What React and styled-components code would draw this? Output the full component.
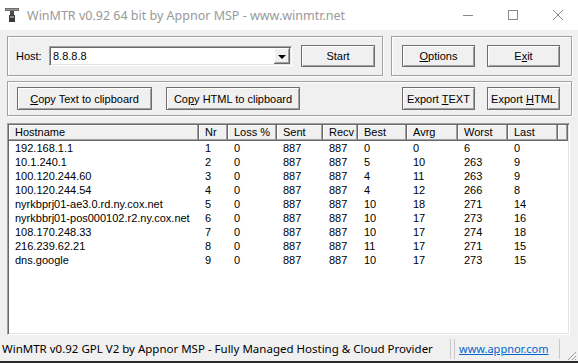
import React from 'react';
import styled, { createGlobalStyle } from 'styled-components';

const GlobalStyle = createGlobalStyle`
  html, body {
    margin: 0;
    padding: 0;
    background: #f0f0f0;
  }
  body {
    width: 578px;
    height: 363px;
    overflow: hidden;
    font-family: "Liberation Sans", Arial, sans-serif;
    font-size: 11px;
    color: #000;
  }
`

const Window = styled.div`
  display: flex;
  flex-direction: column;
  width: 578px;
  height: 363px;
  overflow: hidden;
`

const TitleBar = styled.div`
  display: flex;
  align-items: center;
  height: 30px;
  flex-shrink: 0;
  background: #fff;
`

const AppIcon = styled.svg`
  margin-left: 4px;
  flex-shrink: 0;
`

const Title = styled.span`
  margin-left: 7px;
  font-family: "Noto Sans", sans-serif;
  font-size: 12.5px;
  color: #999;
  white-space: nowrap;
`

const Controls = styled.div`
  display: flex;
  margin-left: auto;
  margin-right: -2px;
  height: 30px;
`

const ControlBox = styled.div`
  width: 45px;
  display: flex;
  align-items: center;
  justify-content: center;
`

const Client = styled.div`
  display: flex;
  flex-direction: column;
  height: 307px;
  flex-shrink: 0;
  padding: 0 6px 0 7px;
  box-sizing: border-box;
`

const Row = styled.div`
  display: flex;
  margin-top: ${p => p.top}px;
  gap: 8px;
`

const GroupBox = styled.div`
  display: flex;
  align-items: center;
  box-sizing: border-box;
  height: ${p => p.h}px;
  width: ${p => (p.w ? `${p.w}px` : 'auto')};
  flex: ${p => (p.w ? '0 0 auto' : '1')};
  padding: 0 ${p => p.pr ?? 7}px 0 ${p => p.pl || 8}px;
  border: 1px solid #a0a0a0;
  box-shadow: inset 1px 1px 0 #fff, 1px 1px 0 #fff;
  gap: ${p => p.gap || 0}px;
`

const Label = styled.span`
  width: 33px;
  flex-shrink: 0;
`

const Combo = styled.div`
  display: flex;
  width: 244px;
  height: 20px;
  box-sizing: border-box;
  background: #fff;
  border-top: 1px solid #a0a0a0;
  border-left: 1px solid #a0a0a0;
  border-bottom: 1px solid #fff;
  border-right: 1px solid #fff;
  box-shadow: inset 1px 1px 0 #696969, inset -1px -1px 0 #e3e3e3;
  padding: 1px;
  margin-right: 9px;
`

const ComboText = styled.span`
  flex: 1;
  padding: 2px 0 0 2px;
  line-height: 13px;
`

const DropButton = styled.div`
  width: 16px;
  display: flex;
  align-items: center;
  justify-content: center;
  background: #f0f0f0;
  box-shadow: inset -1px -1px 0 #696969, inset 1px 1px 0 #fff, inset -2px -2px 0 #a0a0a0;
`

const Arrow = styled.span`
  width: 0;
  height: 0;
  border-left: 4px solid transparent;
  border-right: 4px solid transparent;
  border-top: 4px solid #000;
  margin-top: 1px;
`

const Button = styled.button`
  font-family: "Liberation Sans", Arial, sans-serif;
  font-size: 11px;
  color: #000;
  box-sizing: border-box;
  width: ${p => p.w}px;
  height: ${p => p.h || 23}px;
  margin-left: ${p => p.ml || 0}px;
  flex-shrink: 0;
  padding: 0;
  background: #f0f0f0;
  border: 1px solid #6d6d6d;
  box-shadow: inset 1px 1px 0 #fff, inset -1px -1px 0 #a0a0a0;
  cursor: default;

  u {
    text-decoration: underline;
    text-underline-offset: 1px;
  }
`

const Push = styled.div`
  margin-left: auto;
  display: flex;
  gap: 12px;
  margin-right: 11px;
`

const List = styled.div`
  margin-top: 7px;
  margin-right: 2px;
  height: 212px;
  box-sizing: border-box;
  background: #fff;
  border-top: 1px solid #a0a0a0;
  border-left: 1px solid #a0a0a0;
  border-bottom: 1px solid #fff;
  border-right: 1px solid #fff;
  box-shadow: inset 1px 1px 0 #696969, inset -1px -1px 0 #e3e3e3;
  padding: 1px;
  overflow: hidden;
`

const HeaderRow = styled.div`
  display: flex;
  height: 16px;
  background: #f0f0f0;
`

const HeaderCell = styled.div`
  box-sizing: border-box;
  width: ${p => (p.w ? `${p.w}px` : 'auto')};
  flex: ${p => (p.w ? '0 0 auto' : '1')};
  padding-left: 6px;
  line-height: 15px;
  box-shadow: inset -1px -1px 0 #a0a0a0, inset 1px 1px 0 #fff;
  border-right: 1px solid #696969;
  border-bottom: 1px solid #696969;
  height: 16px;
  white-space: nowrap;
`

const DataRow = styled.div`
  display: flex;
  height: 14px;
  line-height: 14px;
`

const Cell = styled.div`
  box-sizing: border-box;
  width: ${p => p.w}px;
  flex-shrink: 0;
  padding-left: 6px;
  white-space: nowrap;
`

const StatusBar = styled.div`
  display: flex;
  align-items: center;
  height: 24px;
  flex-shrink: 0;
  font-family: "Noto Sans", sans-serif;
  font-size: 11.5px;
`

const StatusText = styled.span`
  width: 451px;
  padding-left: 2px;
  white-space: nowrap;
  overflow: hidden;
  box-sizing: border-box;
  border-right: 1px solid #c8c8c8;
  height: 20px;
  line-height: 20px;
`

const StatusLink = styled.a`
  width: 106px;
  box-sizing: border-box;
  margin-left: 3px;
  padding-left: 4px;
  height: 20px;
  line-height: 20px;
  color: #0066cc;
  text-decoration: underline;
  font-size: 11px;
  border-left: 1px solid #c8c8c8;
  border-right: 1px solid #c8c8c8;
`

const Grip = styled.svg`
  margin-left: auto;
  margin-right: 1px;
  align-self: flex-end;
`

const BottomEdge = styled.div`
  height: 2px;
  background: #2a2a2a;
  flex-shrink: 0;
`

const widths = [190, 29, 49, 46, 35, 49, 51, 50, 50]
const headers = ['Hostname', 'Nr', 'Loss %', 'Sent', 'Recv', 'Best', 'Avrg', 'Worst', 'Last']

const hops = [
  ['192.168.1.1', 1, 0, 887, 887, 0, 0, 6, 0],
  ['10.1.240.1', 2, 0, 887, 887, 5, 10, 263, 9],
  ['100.120.244.60', 3, 0, 887, 887, 4, 11, 263, 9],
  ['100.120.244.54', 4, 0, 887, 887, 4, 12, 266, 8],
  ['nyrkbprj01-ae3.0.rd.ny.cox.net', 5, 0, 887, 887, 10, 18, 271, 14],
  ['nyrkbbrj01-pos000102.r2.ny.cox.net', 6, 0, 887, 887, 10, 17, 273, 16],
  ['108.170.248.33', 7, 0, 887, 887, 10, 17, 274, 18],
  ['216.239.62.21', 8, 0, 887, 887, 11, 17, 271, 15],
  ['dns.google', 9, 0, 887, 887, 10, 17, 273, 15],
]

export default function App() {
  return (
    <Window>
      <GlobalStyle />
      <TitleBar>
        <AppIcon width="16" height="16" viewBox="0 0 16 16">
          <rect x="1" y="1" width="14" height="3" fill="#6b6b6b" />
          <rect x="2" y="2" width="12" height="1" fill="#9a9a9a" />
          <rect x="6" y="4" width="4" height="5" fill="#4a4a4a" />
          <rect x="5" y="8" width="6" height="7" fill="#3a3a3a" />
          <rect x="6" y="9" width="4" height="2" fill="#8a8a8a" />
        </AppIcon>
        <Title>WinMTR v0.92 64 bit by Appnor MSP - www.winmtr.net</Title>
        <Controls>
          <ControlBox>
            <svg width="10" height="10" viewBox="0 0 10 10">
              <line x1="0" y1="5.5" x2="10" y2="5.5" stroke="#888" strokeWidth="1" />
            </svg>
          </ControlBox>
          <ControlBox>
            <svg width="10" height="10" viewBox="0 0 10 10">
              <rect x="0.5" y="0.5" width="9" height="9" fill="none" stroke="#888" strokeWidth="1" />
            </svg>
          </ControlBox>
          <ControlBox>
            <svg width="10" height="10" viewBox="0 0 10 10">
              <path d="M0 0 L10 10 M10 0 L0 10" stroke="#888" strokeWidth="1" />
            </svg>
          </ControlBox>
        </Controls>
      </TitleBar>

      <Client>
        <Row top={6}>
          <GroupBox w={376} h={40}>
            <Label>Host:</Label>
            <Combo>
              <ComboText>8.8.8.8</ComboText>
              <DropButton><Arrow /></DropButton>
            </Combo>
            <Button w={74} h={22}>Start</Button>
          </GroupBox>
          <GroupBox h={40} pl={10} pr={11} gap={12}>
            <Button w={73} h={22}><u>O</u>ptions</Button>
            <Button w={73} h={22}>E<u>x</u>it</Button>
          </GroupBox>
        </Row>

        <Row top={5}>
          <GroupBox h={35} pl={9} pr={0}>
            <Button w={135}><u>C</u>opy Text to clipboard</Button>
            <Button w={134} ml={14}>Co<u>p</u>y HTML to clipboard</Button>
            <Push>
              <Button w={73}>Export <u>T</u>EXT</Button>
              <Button w={73}>Export <u>H</u>TML</Button>
            </Push>
          </GroupBox>
        </Row>

        <List>
          <HeaderRow>
            {headers.map((h, i) => (
              <HeaderCell key={h} w={widths[i]}>{h}</HeaderCell>
            ))}
            <HeaderCell />
          </HeaderRow>
          {hops.map(hop => (
            <DataRow key={hop[0]}>
              {hop.map((v, i) => (
                <Cell key={i} w={widths[i]}>{v}</Cell>
              ))}
            </DataRow>
          ))}
        </List>
      </Client>

      <StatusBar>
        <StatusText>WinMTR v0.92 GPL V2 by Appnor MSP - Fully Managed Hosting &amp; Cloud Provider</StatusText>
        <StatusLink href="#">www.appnor.com</StatusLink>
        <Grip width="12" height="12" viewBox="0 0 12 12">
          <path d="M11 3 L3 11 M11 7 L7 11 M11 10 L10 11" stroke="#a0a0a0" strokeWidth="1" />
        </Grip>
      </StatusBar>
      <BottomEdge />
    </Window>
  )
}
